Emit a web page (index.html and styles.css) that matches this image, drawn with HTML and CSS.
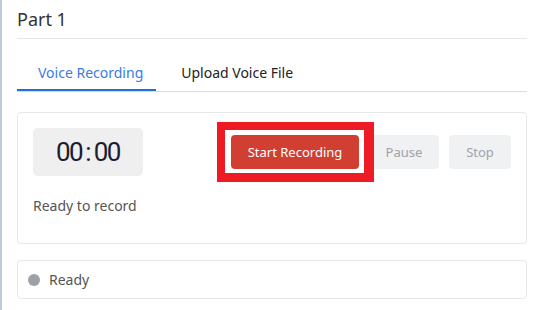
FILE: index.html
```html
<!DOCTYPE html>
<html>
<head>
<meta charset="utf-8">
<link rel="stylesheet" href="styles.css">
</head>
<body>
<div class="page">
  <h2 class="title">Part 1</h2>
  <div class="tabs">
    <div class="tab active">Voice Recording</div>
    <div class="tab">Upload Voice File</div>
  </div>
  <div class="card">
    <div class="rec-row">
      <div class="timer">00<span class="colon">:</span>00</div>
      <div class="buttons">
        <div class="highlight-wrap">
          <button class="btn btn-start">Start Recording</button>
          <span class="annot"></span>
        </div>
        <button class="btn btn-off btn-pause">Pause</button>
        <button class="btn btn-off btn-stop">Stop</button>
      </div>
    </div>
    <div class="rec-status">Ready to record</div>
  </div>
  <div class="status">
    <span class="dot"></span>
    <span>Ready</span>
  </div>
</div>
</body>
</html>
```

FILE: styles.css
```css
html, body {
  margin: 0;
  padding: 0;
  background: #fff;
}
body {
  font-family: "Noto Sans", "Open Sans", sans-serif;
  color: #222;
  border-left: 2px solid #bccbe0;
  min-height: 310px;
  box-sizing: border-box;
}
.page {
  padding: 0 13px 0 15px;
}
.title {
  margin: 0;
  font-size: 18px;
  font-weight: 400;
  color: #333;
  height: 39px;
  line-height: 39px;
  border-bottom: 1px solid #e6e6e6;
  box-sizing: border-box;
}
.tabs {
  display: flex;
  margin-top: 13px;
  border-bottom: 1px solid #dcdcdc;
}
.tab {
  padding: 6px 21px 0;
  height: 39px;
  line-height: 30px;
  font-size: 14px;
  color: #222;
  box-sizing: border-box;
}
.tab.active {
  color: #3b7be4;
  border-bottom: 2px solid #1e6fe6;
  padding-right: 13px;
}
.tab + .tab {
  padding-left: 25px;
}
.card {
  margin-top: 20px;
  border: 1px solid #e8e8e8;
  border-radius: 4px;
  padding: 15px 15px 0 15px;
  height: 132px;
  box-sizing: border-box;
}
.rec-row {
  display: flex;
  justify-content: space-between;
  align-items: center;
}
.timer {
  width: 110px;
  height: 48px;
  background: #efefef;
  border-radius: 5px;
  display: flex;
  align-items: center;
  justify-content: center;
  font-family: "Roboto", sans-serif;
  font-size: 26px;
  letter-spacing: -1.6px;
  color: #1c1c30;
}
.colon {
  padding: 0 4px 0 3px;
}
.buttons {
  display: flex;
  gap: 10px;
  align-items: center;
}
.highlight-wrap {
  position: relative;
  display: flex;
}
.btn {
  height: 34px;
  border: none;
  border-radius: 4px;
  padding: 0;
  font-family: "Noto Sans", "Open Sans", sans-serif;
  font-size: 13px;
  text-align: center;
}
.btn-start {
  width: 128px;
  background: #d03f31;
  color: #fff;
}
.btn-pause {
  width: 70px;
}
.btn-stop {
  width: 62px;
}
.btn-off {
  background: #f0f1f3;
  color: #9ea3aa;
}
.annot {
  position: absolute;
  left: -14px;
  top: -13px;
  right: -15px;
  bottom: -13px;
  border: 8px solid #ed1c24;
  border-right-width: 10px;
  border-bottom-width: 9px;
  z-index: 2;
}
.rec-status {
  margin-top: 20px;
  font-size: 14px;
  color: #555;
  line-height: 20px;
}
.status {
  margin-top: 16px;
  height: 39px;
  border: 1px solid #e8e8e8;
  border-radius: 4px;
  display: flex;
  align-items: center;
  padding-left: 10px;
  gap: 9px;
  font-size: 14px;
  color: #555;
  box-sizing: border-box;
}
.dot {
  width: 12px;
  height: 12px;
  border-radius: 50%;
  background: #9da1a7;
}
```
